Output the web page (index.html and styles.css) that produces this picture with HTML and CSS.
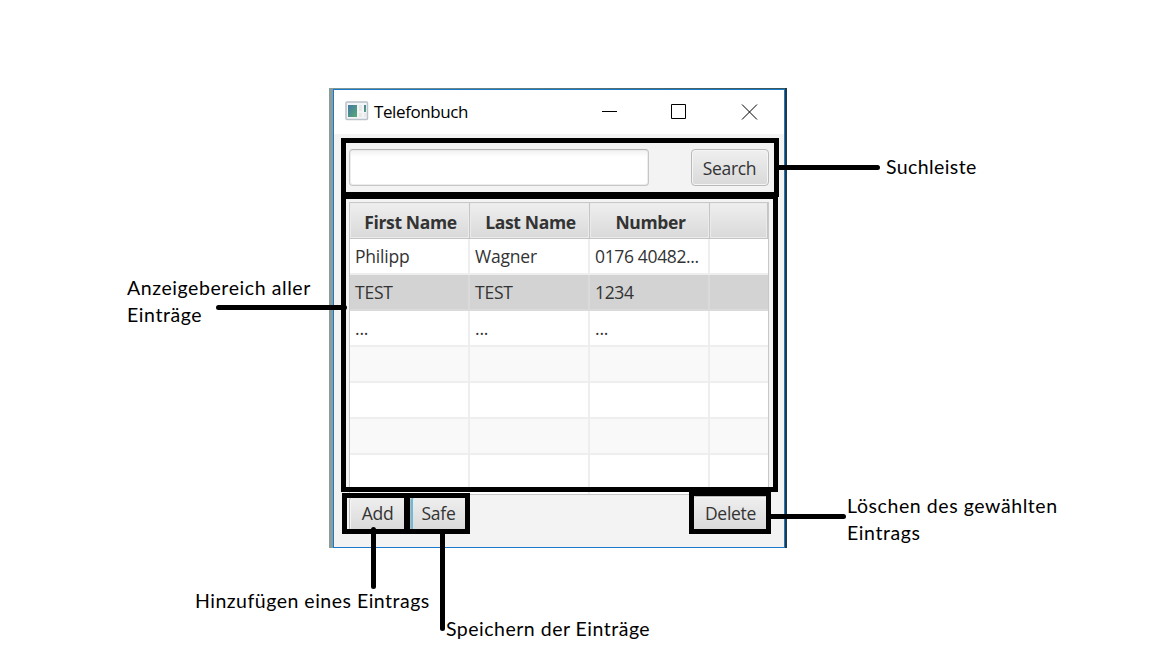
FILE: index.html
```html
<!DOCTYPE html>
<html lang="de">
<head>
<meta charset="utf-8">
<title>Telefonbuch</title>
<link rel="stylesheet" href="styles.css">
</head>
<body>
<main class="canvas">
  <section class="window">
    <header class="titlebar">
      <svg class="app-icon" width="24" height="20" viewBox="0 0 24 20">
        <defs><linearGradient id="screen" x1="0" y1="0" x2="1" y2="1"><stop offset="0" stop-color="#4478a5"/><stop offset="1" stop-color="#57aa73"/></linearGradient></defs>
        <rect x="1" y="1" width="21.500" height="17.500" rx="1" fill="#f3f4f5" stroke="#bac1ca" stroke-width="1.500"/>
        <rect x="3" y="4" width="9" height="12" fill="url(#screen)"/>
        <path d="M14 4h3v6h-3zM14 12h3v4h-3zM19 12h2v4h-2z" fill="#e8e9e7"/>
        <rect x="19" y="4" width="2" height="7" fill="url(#screen)"/>
      </svg>
      <h1 class="title">Telefonbuch</h1>
      <svg class="controls" width="160" height="17" viewBox="0 0 160 17" fill="none" stroke="#000">
        <path d="M1 8.500h15M70.500 1.500h14v14h-14zM141 1.500l15 15M156 1.500l-15 15"/>
      </svg>
    </header>
    <div class="content">
      <div class="search-row">
        <input class="field" type="text" aria-label="Search">
        <button class="button search">Search</button>
      </div>
      <div class="table">
        <div class="row head"><div>First Name</div><div>Last Name</div><div>Number</div><div></div></div>
        <div class="row"><div>Philipp</div><div>Wagner</div><div class="phone">0176 40482...</div><div></div></div>
        <div class="row selected"><div>TEST</div><div>TEST</div><div class="phone">1234</div><div></div></div>
        <div class="row"><div>...</div><div>...</div><div>...</div><div></div></div>
        <div class="row even"><div></div><div></div><div></div><div></div></div>
        <div class="row"><div></div><div></div><div></div><div></div></div>
        <div class="row even"><div></div><div></div><div></div><div></div></div>
        <div class="row last"><div></div><div></div><div></div><div></div></div>
      </div>
      <div class="actions">
        <button class="button add">Add</button>
        <button class="button safe">Safe</button>
        <button class="button delete">Delete</button>
      </div>
    </div>
  </section>
  <svg class="marks" width="1152" height="648" viewBox="0 0 1152 648" fill="none" stroke="#000" stroke-width="5">
    <path d="M343.500 492V140.500H776.500V197M775.500 197V489.500H341"/>
    <path d="M341 195.500H778" stroke-width="7"/>
    <path d="M344.500 495.500H467.500V531.500H344.500z"/>
    <path d="M407 495V532" stroke-width="6"/>
    <path d="M691.500 493.500H768.500V531.500H691.500z"/>
    <path d="M779 167.500H877.500M218.500 307.500H344.500M771 516.500H843.500M373.500 529.500V586.500M442.500 534V628.500" stroke-linecap="round"/>
  </svg>
  <p class="label area">Anzeigebereich aller<br>Einträge</p>
  <p class="label find">Suchleiste</p>
  <p class="label remove">Löschen des gewählten<br>Eintrags</p>
  <p class="label insert">Hinzufügen eines Eintrags</p>
  <p class="label save">Speichern der Einträge</p>
</main>
</body>
</html>
```
FILE: styles.css
```css
* { box-sizing: border-box; }
body { margin: 0; background: #fff; overflow: hidden; }
.canvas { position: relative; width: 1152px; height: 648px; overflow: hidden; }
.window {
  position: absolute; left: 329px; top: 88px; width: 458px; height: 460px;
  padding: 1px 2px 0 4px;
  background: linear-gradient(90deg, #8b9d9b 0 4px, transparent 4px 456px, #243944 456px), linear-gradient(90deg, #819896, #395558);
  font-family: "Open Sans", "Noto Sans", sans-serif; color: #333;
}
.titlebar {
  display: flex; align-items: center; height: 45px; padding-left: 11px;
  background: #fff; border: 1px solid #1979ca; border-bottom: 0;
}
.app-icon { margin-top: -2px; }
.title { margin: 0 0 0 5px; width: 95px; font-size: 17px; line-height: 24px; font-weight: 400; color: #000; letter-spacing: -0.4px; white-space: nowrap; }
.controls { margin: -2px 0 0 132px; }
.content {
  height: 414px; padding: 15px 15px 0;
  background: #f3f3f3; border: 1px solid #1979ca; border-top: 0;
}
.search-row { display: flex; justify-content: space-between; height: 38px; }
.field {
  width: 300px; height: 37px; border: 1px solid #c6c6c6; border-top-color: #b2b2b2; border-radius: 4px;
  background: linear-gradient(#f0f0f0, #fff 7px); box-shadow: inset 0 0 0 1px #ececec;
}
.button {
  height: 37px; padding: 0; border: 1px solid #b9b9b9; border-radius: 4px;
  background: linear-gradient(#efefef, #d9d9d9); box-shadow: inset 0 0 0 1px #f5f5f5;
  font: 17.5px/34px "Open Sans", "Noto Sans", sans-serif; color: #333; letter-spacing: -0.3px;
}
.search { width: 78px; padding-right: 1px; }
.table { height: 293px; margin-top: 15px; border: 1px solid #c8c8c8; overflow: hidden; background: #fff; font-size: 17.5px; }
.row { display: grid; grid-template-columns: 120px 120px 120px 1fr; height: 36px; background: #fff; line-height: 34px; white-space: nowrap; }
.row > div { padding-left: 5px; border-right: 2px solid #eee; border-bottom: 2px solid #eee; letter-spacing: -0.2px; }
.row > div:last-child { border-right: 0; }
.row.head > div {
  height: 36px; padding: 0 0 0 2px; text-align: center; font-weight: 700; line-height: 38px;
  background: linear-gradient(#efefef, #d9d9d9); border-right: 1px solid #c5c5c5; border-bottom: 1px solid #c5c5c5;
  box-shadow: inset 0 0 0 1px #ebebeb; letter-spacing: -0.35px;
}
.row > .phone { letter-spacing: -0.35px; }
.row.even { background: #f9f9f9; }
.row.selected { background: #d3d3d3; }
.row.selected > div { border-color: #dadada; }
.row.last { height: 42px; }
.actions { display: flex; margin-top: 1px; }
.actions .button { height: 36px; line-height: 32px; padding-bottom: 2px; }
.add { width: 57px; }
.safe { width: 57px; margin-left: 4px; box-shadow: inset 2px 0 #69bddb, inset -1px -1px #afd6e0; }
.delete { width: 77px; margin-left: auto; }
.marks { position: absolute; left: 0; top: 0; }
.label { position: absolute; margin: 0; color: #000; font: 19.5px/27px Lato, Inter, sans-serif; letter-spacing: 0.58px; white-space: nowrap; }
.area { left: 127px; top: 274px; }
.find { left: 886px; top: 153px; letter-spacing: 0.4px; }
.remove { left: 847px; top: 492px; }
.insert { left: 195px; top: 587px; letter-spacing: 0.5px; }
.save { left: 446px; top: 615px; letter-spacing: 0.5px; }
```
